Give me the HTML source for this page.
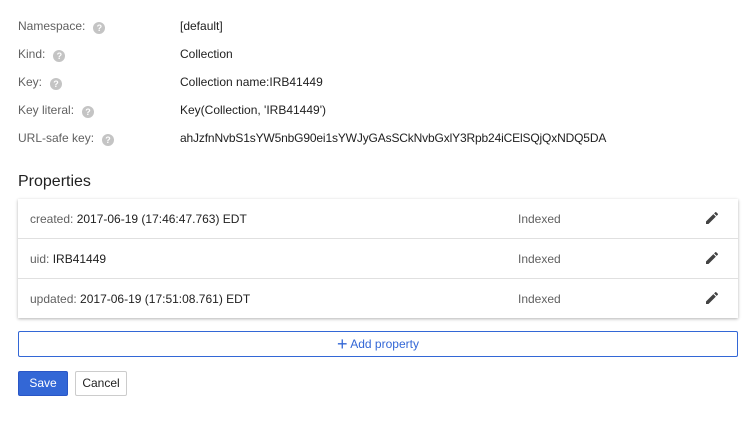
<!DOCTYPE html>
<html><head><style>
body{margin:0;background:#fff;font-family:"Liberation Sans",Arial,sans-serif;font-size:12px;color:#212121;width:747px;height:428px;position:relative;overflow:hidden}
.r{position:absolute;left:18px;height:16px;line-height:16px}
.l{color:#616161}
.q{display:inline-block;width:12px;height:12px;border-radius:50%;background:#c4c4c4;color:#fff;font-size:9px;line-height:12px;text-align:center;font-weight:bold;margin-left:8px;vertical-align:-1px}
.v{position:absolute;left:180px;height:16px;line-height:16px}
h2{position:absolute;left:18px;top:173px;margin:0;font-size:16px;font-weight:normal;color:#212121}
.card{position:absolute;left:18px;top:199px;width:720px;height:119px;box-shadow:0 1px 3px rgba(0,0,0,.3);background:#fff}
.row{height:40px;border-bottom:1px solid #e0e0e0;position:relative;box-sizing:border-box}
.row:last-child{border-bottom:none}
.row .t{position:absolute;left:12px;top:12px;line-height:16px}
.row .i{position:absolute;left:500px;top:12px;line-height:16px;color:#616161}
.row svg{position:absolute;left:688px;top:13px}
.add{position:absolute;left:18px;top:331px;width:720px;height:26px;box-sizing:border-box;border:1px solid #3367d6;border-radius:2px;color:#3367d6;text-align:center;line-height:24px}
.btn{position:absolute;top:371px;height:25px;box-sizing:border-box;border-radius:2px;line-height:23px;text-align:center}
</style></head><body>
<div class="r l" style="top:18px">Namespace:<span class="q">?</span></div><div class="v" style="top:18px">[default]</div>
<div class="r l" style="top:46px">Kind:<span class="q">?</span></div><div class="v" style="top:46px">Collection</div>
<div class="r l" style="top:74px">Key:<span class="q">?</span></div><div class="v" style="top:74px">Collection name:IRB41449</div>
<div class="r l" style="top:102px">Key literal:<span class="q">?</span></div><div class="v" style="top:102px">Key(Collection, 'IRB41449')</div>
<div class="r l" style="top:130px">URL-safe key:<span class="q">?</span></div><div class="v" style="top:130px;letter-spacing:-0.15px">ahJzfnNvbS1sYW5nbG90ei1sYWJyGAsSCkNvbGxlY3Rpb24iCElSQjQxNDQ5DA</div>
<h2>Properties</h2>
<div class="card">
<div class="row"><span class="t"><span class="l">created:</span> 2017-06-19 (17:46:47.763) EDT</span><span class="i">Indexed</span><svg width="12" height="12" viewBox="3 3 18 18"><path fill="#424242" d="M3 17.25V21h3.75L17.81 9.94l-3.75-3.75L3 17.25zM20.71 7.04a1 1 0 0 0 0-1.41l-2.34-2.34a1 1 0 0 0-1.41 0l-1.830 1.83 3.75 3.75 1.83-1.83z"/></svg></div>
<div class="row"><span class="t"><span class="l">uid:</span> IRB41449</span><span class="i">Indexed</span><svg width="12" height="12" viewBox="3 3 18 18"><path fill="#424242" d="M3 17.25V21h3.75L17.81 9.94l-3.75-3.75L3 17.25zM20.71 7.04a1 1 0 0 0 0-1.41l-2.34-2.34a1 1 0 0 0-1.41 0l-1.83 1.83 3.75 3.75 1.83-1.83z"/></svg></div>
<div class="row"><span class="t"><span class="l">updated:</span> 2017-06-19 (17:51:08.761) EDT</span><span class="i">Indexed</span><svg width="12" height="12" viewBox="3 3 18 18"><path fill="#424242" d="M3 17.25V21h3.75L17.81 9.94l-3.75-3.75L3 17.25zM20.71 7.04a1 1 0 0 0 0-1.41l-2.34-2.34a1 1 0 0 0-1.41 0l-1.83 1.83 3.75 3.75 1.83-1.83z"/></svg></div>
</div>
<div class="add"><span style="font-size:18px;vertical-align:-2px">+</span> Add property</div>
<div class="btn" style="left:18px;width:50px;background:#3367d6;color:#fff;border:1px solid #2a56c6">Save</div>
<div class="btn" style="left:75px;width:52px;background:#fff;border:1px solid #ccc;color:#212121">Cancel</div>
</body></html>
